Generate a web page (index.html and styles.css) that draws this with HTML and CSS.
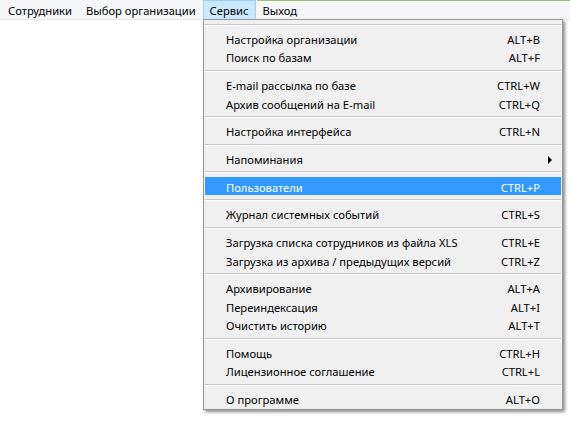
FILE: index.html
```html
<!DOCTYPE html>
<html lang="ru">
<head>
<meta charset="utf-8">
<title>Меню</title>
<link rel="stylesheet" href="styles.css">
</head>
<body>
<div class="window">
  <div class="menubar">
    <div class="mb-item first">Сотрудники</div>
    <div class="mb-item">Выбор организации</div>
    <div class="mb-item open">Сервис</div>
    <div class="mb-item">Выход</div>
  </div>
  <div class="dropdown">
    <div class="sep"></div>
    <div class="mi"><span>Настройка организации</span><span>ALT+B</span></div>
    <div class="mi"><span>Поиск по базам</span><span>ALT+F</span></div>
    <div class="sep"></div>
    <div class="mi"><span>E-mail рассылка по базе</span><span>CTRL+W</span></div>
    <div class="mi"><span>Архив сообщений на E-mail</span><span>CTRL+Q</span></div>
    <div class="sep"></div>
    <div class="mi"><span>Настройка интерфейса</span><span>CTRL+N</span></div>
    <div class="sep"></div>
    <div class="mi sub"><span>Напоминания</span><span class="arrow"></span></div>
    <div class="sep"></div>
    <div class="mi active"><span>Пользователи</span><span>CTRL+P</span></div>
    <div class="sep"></div>
    <div class="mi"><span>Журнал системных событий</span><span>CTRL+S</span></div>
    <div class="sep"></div>
    <div class="mi"><span>Загрузка списка сотрудников из файла XLS</span><span>CTRL+E</span></div>
    <div class="mi"><span>Загрузка из архива / предыдущих версий</span><span>CTRL+Z</span></div>
    <div class="sep"></div>
    <div class="mi"><span>Архивирование</span><span>ALT+A</span></div>
    <div class="mi"><span>Переиндексация</span><span>ALT+I</span></div>
    <div class="mi"><span>Очистить историю</span><span>ALT+T</span></div>
    <div class="sep"></div>
    <div class="mi"><span>Помощь</span><span>CTRL+H</span></div>
    <div class="mi"><span>Лицензионное соглашение</span><span>CTRL+L</span></div>
    <div class="sep"></div>
    <div class="mi"><span>О программе</span><span>ALT+O</span></div>
  </div>
</div>
</body>
</html>
```
FILE: styles.css
```css
html, body {
  margin: 0;
  padding: 0;
  background: #ffffff;
}
body {
  font-family: "Noto Sans", "Open Sans", sans-serif;
  font-size: 11.2px;
  color: #000;
}
.window {
  position: relative;
  width: 570px;
  height: 421px;
  overflow: hidden;
}
.menubar {
  display: flex;
  background: #f5f6f7;
  border-bottom: 1px solid #e6e7e8;
  box-sizing: border-box;
  height: 20px;
  position: relative;
}
.menubar::before {
  content: "";
  position: absolute;
  left: 257px;
  right: 0;
  top: 0;
  height: 1px;
  background: #9fbf72;
}
.mb-item {
  padding: 0 6px;
  border: 1px solid transparent;
  line-height: 19px;
  white-space: nowrap;
}
.mb-item.first {
  margin-left: 1px;
}
.mb-item.open {
  background: #cce8ff;
  border-color: #99d1ff;
  border-bottom-color: #cce8ff;
  position: relative;
  z-index: 2;
}
.dropdown {
  position: absolute;
  left: 203px;
  top: 19px;
  width: 360px;
  box-sizing: border-box;
  background: #f0f0f0;
  border: 1px solid #979797;
  padding: 0 1px 1px;
  box-shadow: 2px 2px 3px rgba(0, 0, 0, 0.45);
}
.sep {
  height: 9.2px;
  display: flex;
  align-items: center;
}
.sep::after {
  content: "";
  flex: 1;
  height: 1px;
  border-bottom: 1px solid #ffffff;
  background: #c8c8c8;
}
.mi {
  display: flex;
  justify-content: space-between;
  align-items: center;
  height: 18.5px;
  box-sizing: border-box;
  padding: 2px 21px 0 21px;
  white-space: nowrap;
}
.mi.active {
  background: #3399ff;
  color: #ffffff;
}
.mi.sub {
  padding-right: 9px;
}
.arrow {
  width: 0;
  height: 0;
  border-top: 4px solid transparent;
  border-bottom: 4px solid transparent;
  border-left: 4px solid #000;
}
```
